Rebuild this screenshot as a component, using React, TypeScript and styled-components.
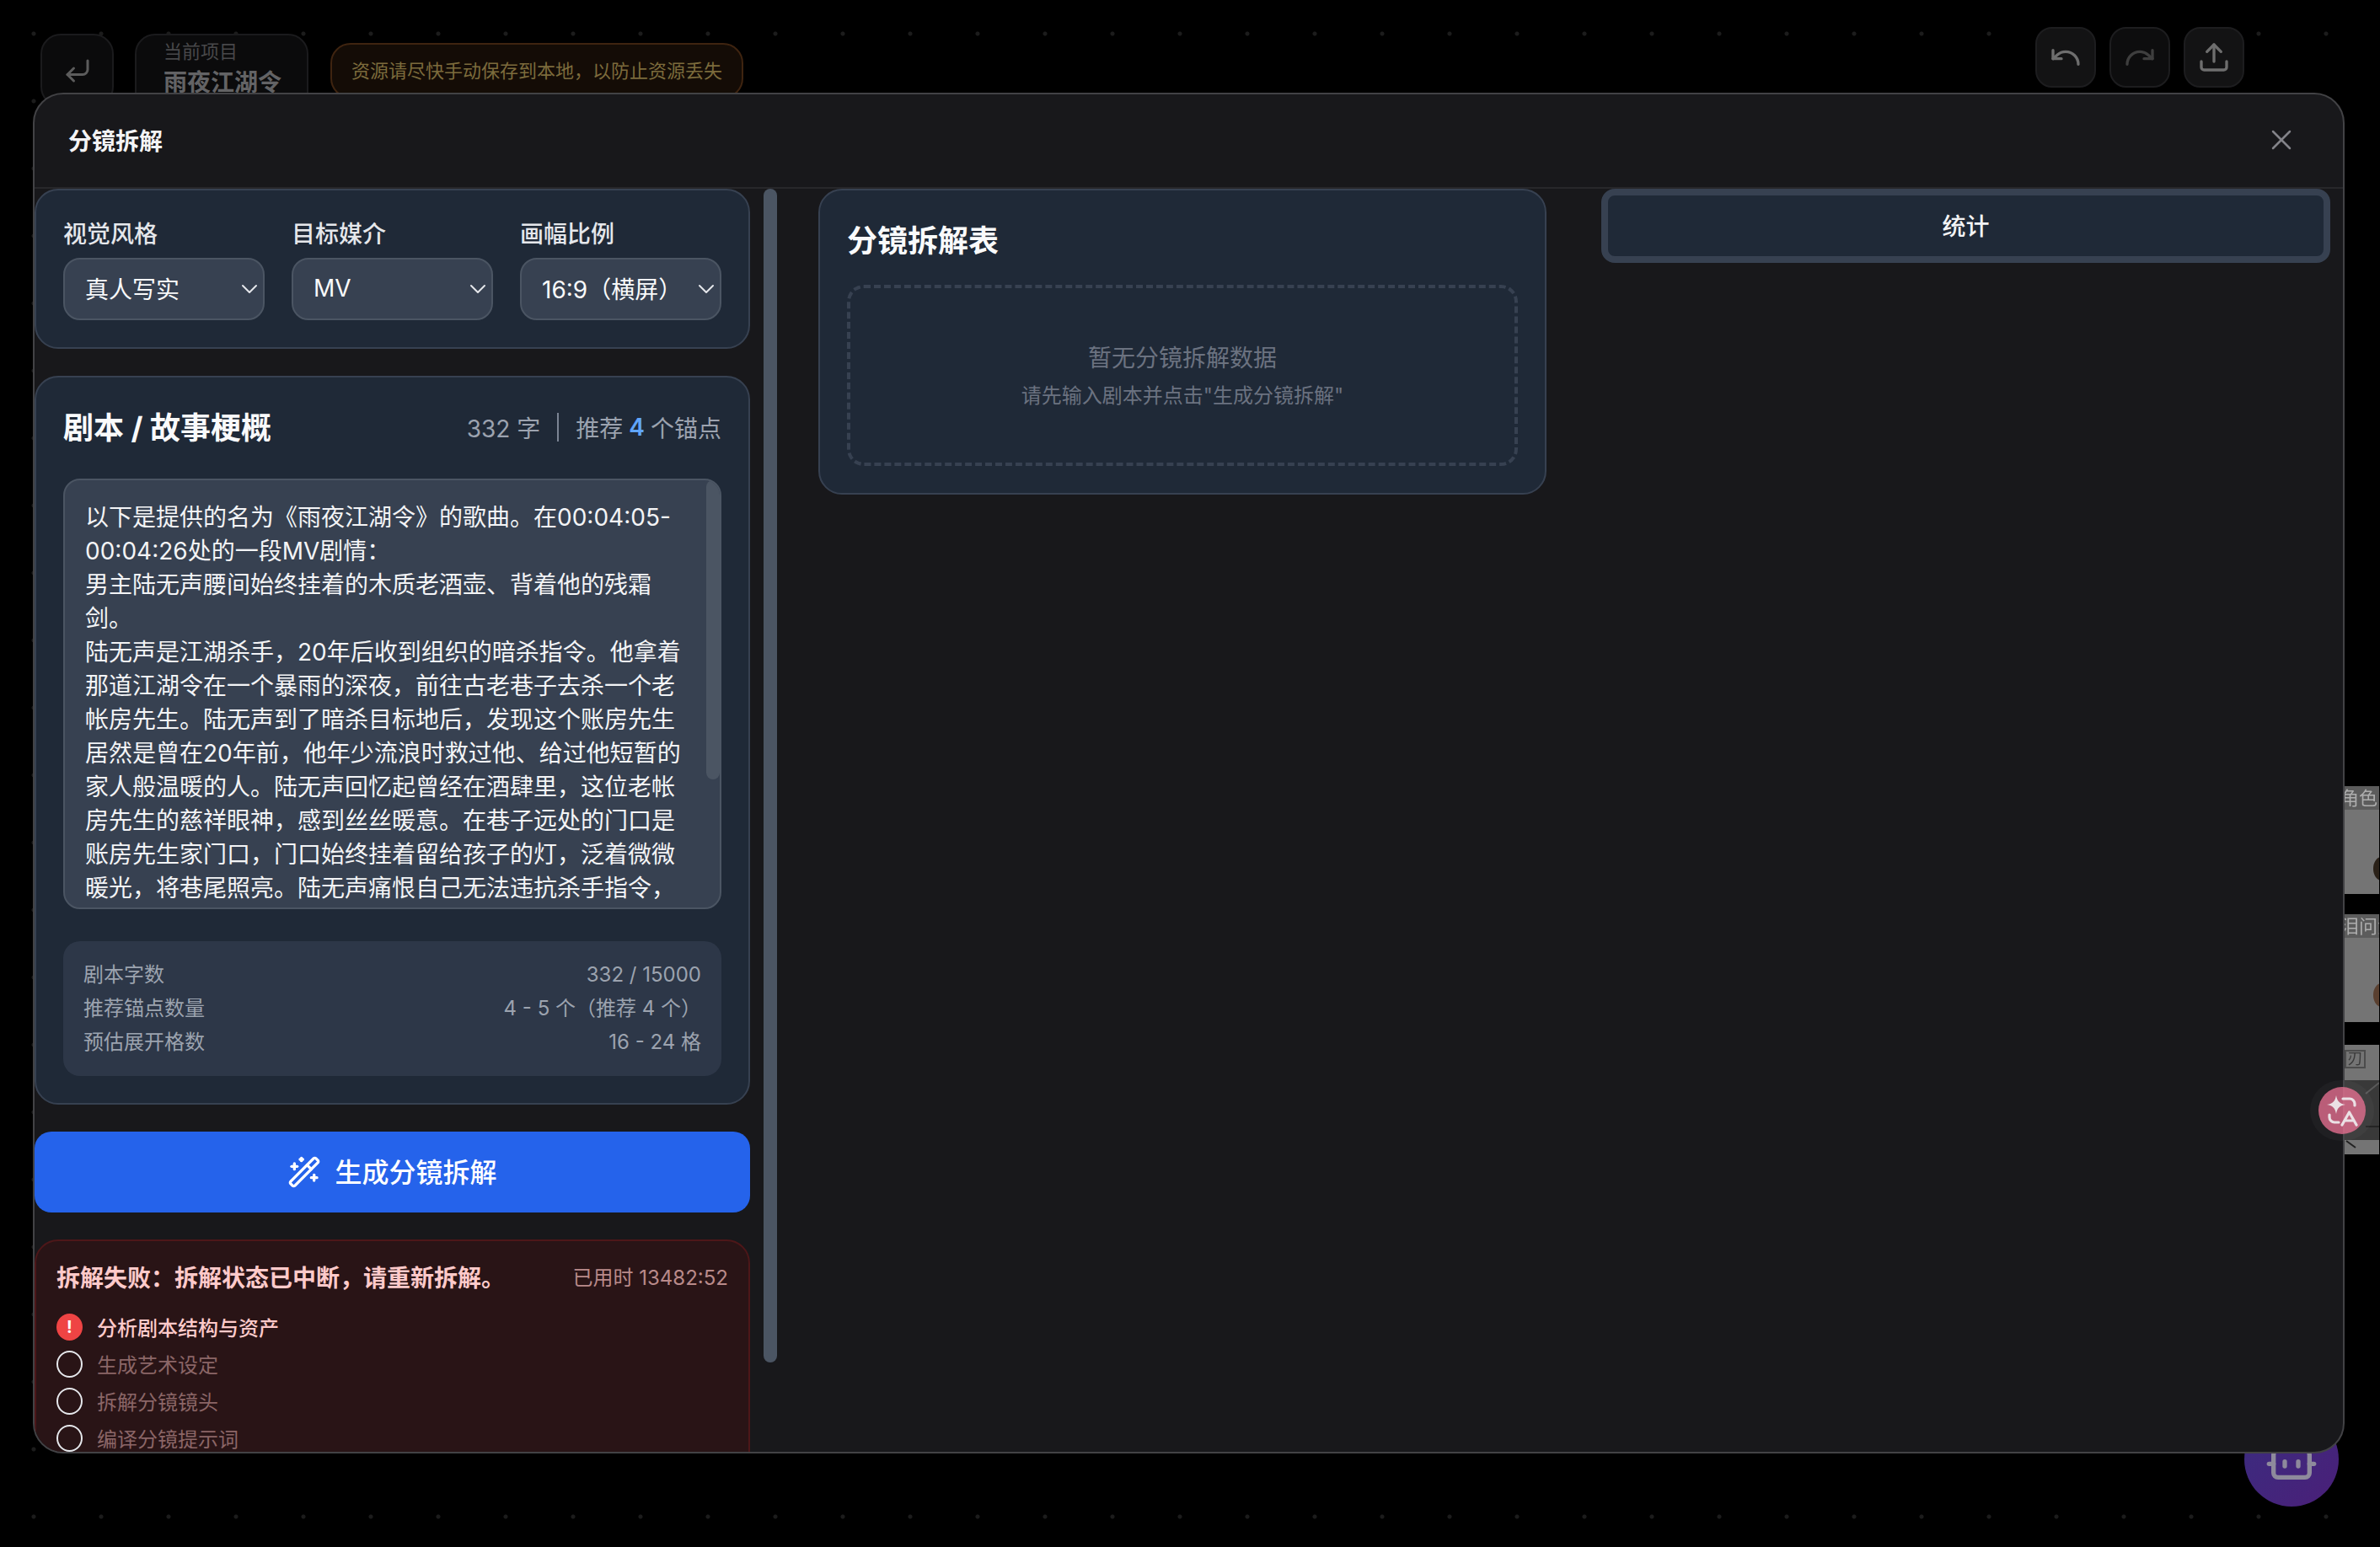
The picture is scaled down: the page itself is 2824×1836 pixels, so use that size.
import React from "react";
import styled, { createGlobalStyle } from "styled-components";
import { ChevronDown, CornerDownLeft, Redo, Undo, Upload, WandSparkles, X, Bot } from "lucide-react";

const GlobalStyle = createGlobalStyle`
  html, body {
    margin: 0;
    background: #000;
  }
  * {
    box-sizing: border-box;
  }
`;

const Page = styled.div`
  position: relative;
  width: 2824px;
  height: 1836px;
  overflow: hidden;
  background-color: #000;
  background-image: radial-gradient(circle at center, #1c1c1c 0, #1c1c1c 2px, transparent 3px);
  background-size: 80px 80px;
  font-family: Inter, "Noto Sans CJK SC", sans-serif;
  color: #fff;
`;

const TopBar = styled.header`
  display: flex;
  align-items: flex-start;
  padding: 32px 161px 0 48px;
`;

const BackButton = styled.button`
  display: flex;
  align-items: center;
  justify-content: center;
  width: 87px;
  height: 87px;
  margin: 8px 25px 0 0;
  padding: 0;
  border: 2px solid #1b1b1d;
  border-radius: 24px;
  background: #0b0b0c;
  color: #5c5c5c;
`;

const ProjectPill = styled.div`
  width: 206px;
  height: 100px;
  margin: 8px 26px 0 0;
  padding: 4px 0 0 32px;
  border: 2px solid #1b1b1d;
  border-radius: 24px;
  background: #0b0b0c;
`;

const ProjectLabel = styled.div`
  font-size: 22px;
  line-height: 30px;
  color: #48484a;
`;

const ProjectName = styled.div`
  font-size: 28px;
  line-height: 44px;
  font-weight: 700;
  color: #636365;
`;

const WarningPill = styled.div`
  width: 490px;
  height: 66px;
  margin-top: 19px;
  padding-top: 16px;
  text-align: center;
  border: 2px solid #3f2410;
  border-radius: 24px;
  background: #140c06;
  font-size: 22px;
  line-height: 30px;
  color: #7c6b3c;
`;

const ToolGroup = styled.div`
  display: flex;
  gap: 16px;
  margin-left: auto;
`;

const ToolButton = styled.button<{ $dim?: boolean }>`
  display: flex;
  align-items: center;
  justify-content: center;
  width: 72px;
  height: 72px;
  padding: 0;
  border: 2px solid #1d1d1f;
  border-radius: 20px;
  background: ${(p) => (p.$dim ? "#0d0d0e" : "#131314")};
  color: ${(p) => (p.$dim ? "#3e3e3e" : "#6e6e6e")};
`;

const CanvasThumb = styled.div<{ $top: number; $height: number }>`
  position: absolute;
  left: 2700px;
  top: ${(p) => p.$top}px;
  width: 123px;
  height: ${(p) => p.$height}px;
  overflow: hidden;
  background: #747474;
`;

const ThumbTag = styled.div`
  height: 28px;
  padding-left: 77px;
  background: #5c5c5c;
  font-size: 22px;
  line-height: 28px;
  white-space: nowrap;
  color: #adadad;
  filter: blur(0.6px);
`;

const ThumbBadge = styled.div`
  position: absolute;
  left: 82px;
  top: 6px;
  width: 25px;
  height: 22px;
  border: 2px solid #4c4c4c;
  font-size: 18px;
  line-height: 18px;
  text-align: center;
  color: #3a3a3a;
  filter: blur(0.5px);
`;

const ThumbBand = styled.div`
  position: absolute;
  left: 0;
  top: 42px;
  width: 100%;
  height: 71px;
  background: #393939;
`;

const ThumbSketch = styled.svg`
  position: absolute;
  left: 0;
  top: 0;
`;

const ThumbHead = styled.div<{ $top: number; $tone: string }>`
  position: absolute;
  left: 116px;
  top: ${(p) => p.$top}px;
  width: 20px;
  height: 28px;
  border-radius: 50%;
  background: ${(p) => p.$tone};
`;

const BotFab = styled.div`
  position: absolute;
  left: 2663px;
  top: 1676px;
  display: flex;
  align-items: center;
  justify-content: center;
  width: 112px;
  height: 112px;
  border-radius: 50%;
  background: linear-gradient(135deg, #3a2d80, #4a1f78);
  color: #8e8a9c;
`;

const Modal = styled.section`
  position: absolute;
  left: 39px;
  top: 110px;
  display: flex;
  flex-direction: column;
  width: 2743px;
  height: 1615px;
  overflow: hidden;
  border: 2px solid #424245;
  border-radius: 36px;
  background: #18181b;
`;

const ModalHeader = styled.div`
  display: flex;
  flex: none;
  align-items: center;
  justify-content: space-between;
  height: 112px;
  padding: 0 53px 2px 40px;
  border-bottom: 2px solid #27272a;
`;

const ModalTitle = styled.h2`
  margin: 0;
  font-size: 28px;
  font-weight: 700;
  color: #f4f4f5;
`;

const CloseIcon = styled.span`
  display: flex;
  color: #84848a;
`;

const ModalBody = styled.div`
  display: flex;
  flex: 1;
  min-height: 0;
`;

const LeftPane = styled.div`
  display: flex;
  flex: none;
  flex-direction: column;
  gap: 32px;
  width: 849px;
  overflow: hidden;
`;

const PaneScroll = styled.div`
  flex: none;
  width: 16px;
  height: 1393px;
  margin: 0 49px 0 16px;
  border-radius: 8px;
  background: #4b5563;
`;

const Card = styled.div`
  flex: none;
  padding: 32px;
  border: 2px solid #374151;
  border-radius: 28px;
  background: #1f2937;
`;

const OptionGrid = styled.div`
  display: grid;
  grid-template-columns: repeat(3, 239px);
  gap: 32px;
`;

const FieldLabel = styled.div`
  margin-bottom: 8px;
  font-size: 28px;
  line-height: 40px;
  font-weight: 500;
  color: #e5e7eb;
`;

const SelectBox = styled.div`
  display: flex;
  align-items: center;
  justify-content: space-between;
  height: 74px;
  padding-left: 24px;
  border: 2px solid #4b5563;
  border-radius: 20px;
  background: #374151;
  font-size: 28px;
  white-space: nowrap;
  color: #f9fafb;

  span {
    margin-top: -2px;
  }

  svg {
    flex: none;
    margin-right: 0;
    color: #e5e7eb;
  }
`;

const ScriptHeader = styled.div`
  display: flex;
  align-items: center;
  justify-content: space-between;
  height: 56px;
  margin-bottom: 32px;
`;

const CardTitle = styled.h3`
  margin: 0;
  font-size: 36px;
  line-height: 52px;
  font-weight: 700;
  color: #f9fafb;
`;

const ScriptMeta = styled.div`
  display: flex;
  align-items: center;
  margin-top: -2px;
  font-size: 28px;
  color: #9ca3af;

  b {
    margin: 0 7px;
    font-weight: 600;
    color: #60a5fa;
  }
`;

const MetaDivider = styled.i`
  width: 2px;
  height: 34px;
  margin: 0 20px;
  background: #7b8493;
`;

const ScriptBox = styled.div`
  position: relative;
  height: 511px;
  overflow: hidden;
  padding: 24px 40px 0 24px;
  border: 2px solid #4b5563;
  border-radius: 20px;
  background: #374151;
  font-size: 28px;
  line-height: 40px;
  white-space: pre-wrap;
  color: #f3f4f6;
`;

const ScriptThumb = styled.div`
  position: absolute;
  top: 0;
  right: 0;
  width: 16px;
  height: 355px;
  border-radius: 8px;
  background: #4b5563;
`;

const StatBox = styled.div`
  margin-top: 38px;
  padding: 20px 24px;
  border-radius: 20px;
  background: #2d3748;
`;

const StatRow = styled.div`
  display: flex;
  justify-content: space-between;
  font-size: 24px;
  line-height: 40px;
  color: #9ca3af;
`;

const GenerateButton = styled.button`
  display: flex;
  flex: none;
  align-items: center;
  justify-content: center;
  gap: 16px;
  height: 96px;
  padding: 0;
  border: 0;
  border-radius: 20px;
  background: #2563eb;
  font-family: inherit;
  font-size: 32px;
  font-weight: 500;
  color: #fff;

  span {
    margin-top: -4px;
  }
`;

const ErrorCard = styled.div`
  flex: none;
  padding: 24px;
  border: 2px solid #4d1719;
  border-radius: 28px;
  background: #291416;
`;

const ErrorHead = styled.div`
  display: flex;
  align-items: center;
  justify-content: space-between;
  margin-bottom: 22px;
  line-height: 40px;
`;

const ErrorTitle = styled.div`
  font-size: 28px;
  font-weight: 700;
  color: #fecaca;
`;

const ErrorTime = styled.div`
  font-size: 24px;
  color: #b98a8a;
`;

const StepList = styled.div`
  display: flex;
  flex-direction: column;
  gap: 12px;
`;

const Step = styled.div<{ $failed?: boolean }>`
  display: flex;
  align-items: center;
  gap: 17px;
  height: 32px;
  font-size: 24px;
  font-weight: ${(p) => (p.$failed ? 500 : 400)};
  color: ${(p) => (p.$failed ? "#fecaca" : "#8b6667")};
`;

const StepText = styled.span`
  margin-top: -2px;
`;

const StepMark = styled.span<{ $failed?: boolean }>`
  display: flex;
  flex: none;
  align-items: center;
  justify-content: center;
  width: 31px;
  height: 32px;
  border-radius: 50%;
  border: ${(p) => (p.$failed ? "0" : "2px solid #e5e7eb")};
  background: ${(p) => (p.$failed ? "#ef4444" : "transparent")};
  font-size: 20px;
  font-weight: 700;
  color: #fff;
`;

const CenterPane = styled.div`
  flex: none;
  align-self: flex-start;
  width: 864px;
  margin-right: 65px;
`;

const TableTitle = styled(CardTitle)`
  margin-bottom: 26px;
  padding-top: 2px;
  height: 54px;
`;

const EmptyBox = styled.div`
  display: flex;
  flex-direction: column;
  align-items: center;
  justify-content: center;
  height: 215px;
  border: 4px dashed #374151;
  border-radius: 20px;
`;

const EmptyMain = styled.div`
  font-size: 28px;
  line-height: 40px;
  color: #6b7280;
`;

const EmptySub = styled.div`
  margin-top: 9px;
  font-size: 24px;
  line-height: 32px;
  color: #6b7280;
`;

const StatsTab = styled.button`
  flex: none;
  align-self: flex-start;
  width: 865px;
  height: 88px;
  padding: 0 0 2px;
  border: 8px solid #374151;
  border-radius: 16px;
  background: #1f2937;
  font-family: inherit;
  font-size: 28px;
  font-weight: 500;
  color: #f3f4f6;
`;

const TranslateHalo = styled.div`
  position: absolute;
  left: 2741px;
  top: 1282px;
  display: flex;
  align-items: center;
  justify-content: center;
  width: 76px;
  height: 72px;
  border-radius: 36px;
  background: rgba(255, 255, 255, 0.03);
`;

const TranslateButton = styled.div`
  display: flex;
  width: 56px;
  height: 56px;
  border-radius: 50%;
  background: rgba(239, 115, 150, 0.75);
`;

const script = `以下是提供的名为《雨夜江湖令》的歌曲。在00:04:05-00:04:26处的一段MV剧情：
男主陆无声腰间始终挂着的木质老酒壶、背着他的残霜剑。
陆无声是江湖杀手，20年后收到组织的暗杀指令。他拿着那道江湖令在一个暴雨的深夜，前往古老巷子去杀一个老帐房先生。陆无声到了暗杀目标地后，发现这个账房先生居然是曾在20年前，他年少流浪时救过他、给过他短暂的家人般温暖的人。陆无声回忆起曾经在酒肆里，这位老帐房先生的慈祥眼神，感到丝丝暖意。在巷子远处的门口是账房先生家门口，门口始终挂着留给孩子的灯，泛着微微暖光，将巷尾照亮。陆无声痛恨自己无法违抗杀手指令，`;

const options = [
  { label: "视觉风格", value: "真人写实" },
  { label: "目标媒介", value: "MV" },
  { label: "画幅比例", value: "16:9（横屏）" },
];

const stats = [
  { label: "剧本字数", value: "332 / 15000" },
  { label: "推荐锚点数量", value: "4 - 5 个（推荐 4 个）" },
  { label: "预估展开格数", value: "16 - 24 格" },
];

const steps = ["分析剧本结构与资产", "生成艺术设定", "拆解分镜镜头", "编译分镜提示词"];

function TranslateIcon() {
  return (
    <svg width="56" height="56" viewBox="0 0 56 56" fill="none" stroke="#ebe1e5" strokeWidth="3.2" strokeLinecap="round" strokeLinejoin="round">
      <path d="M21 10c1.4 7 3.6 9.600 11 11-7.400 1.400-9.600 4-11 11-1.400-7-3.600-9.600-11-11 7.400-1.400 9.600-4 11-11z" fill="#ebe1e5" stroke="none" />
      <path d="M29 14h8a6 6 0 0 1 6 6v2" />
      <path d="M13 33v3a6 6 0 0 0 6 6h5" />
      <path d="M28 45l8.500-15 8.500 15M31 40h11" />
    </svg>
  );
}

export default function App() {
  return (
    <Page>
      <GlobalStyle />
      <TopBar>
        <BackButton><CornerDownLeft size={36} strokeWidth={2} /></BackButton>
        <ProjectPill>
          <ProjectLabel>当前项目</ProjectLabel>
          <ProjectName>雨夜江湖令</ProjectName>
        </ProjectPill>
        <WarningPill>资源请尽快手动保存到本地，以防止资源丢失</WarningPill>
        <ToolGroup>
          <ToolButton><Undo size={40} /></ToolButton>
          <ToolButton $dim><Redo size={40} /></ToolButton>
          <ToolButton><Upload size={40} /></ToolButton>
        </ToolGroup>
      </TopBar>

      <CanvasThumb $top={933} $height={128}>
        <ThumbTag>角色</ThumbTag>
        <ThumbHead $top={84} $tone="#2a2118" />
      </CanvasThumb>
      <CanvasThumb $top={1085} $height={128}>
        <ThumbTag>泪问活</ThumbTag>
        <ThumbHead $top={82} $tone="#5a4030" />
      </CanvasThumb>
      <CanvasThumb $top={1240} $height={130}>
        <ThumbBadge>刃</ThumbBadge>
        <ThumbBand />
        <ThumbSketch width="123" height="130" viewBox="0 0 123 130" fill="none" stroke="#222" strokeWidth="2">
          <path d="M107 58l16-13" stroke="#5a5a5a" />
          <path d="M107 97h16" stroke="#242424" />
          <path d="M84 114l11 8" />
        </ThumbSketch>
      </CanvasThumb>

      <BotFab><Bot size={64} /></BotFab>

      <Modal>
        <ModalHeader>
          <ModalTitle>分镜拆解</ModalTitle>
          <CloseIcon><X size={40} strokeWidth={1.5} /></CloseIcon>
        </ModalHeader>
        <ModalBody>
          <LeftPane>
            <Card>
              <OptionGrid>
                {options.map((o) => (
                  <div key={o.label}>
                    <FieldLabel>{o.label}</FieldLabel>
                    <SelectBox>
                      <span>{o.value}</span>
                      <ChevronDown size={32} strokeWidth={1.5} />
                    </SelectBox>
                  </div>
                ))}
              </OptionGrid>
            </Card>

            <Card>
              <ScriptHeader>
                <CardTitle>剧本 / 故事梗概</CardTitle>
                <ScriptMeta>
                  332 字<MetaDivider />推荐<b>4</b>个锚点
                </ScriptMeta>
              </ScriptHeader>
              <ScriptBox>
                {script}
                <ScriptThumb />
              </ScriptBox>
              <StatBox>
                {stats.map((s) => (
                  <StatRow key={s.label}>
                    <span>{s.label}</span>
                    <span>{s.value}</span>
                  </StatRow>
                ))}
              </StatBox>
            </Card>

            <GenerateButton>
              <WandSparkles size={40} />
              <span>生成分镜拆解</span>
            </GenerateButton>

            <ErrorCard>
              <ErrorHead>
                <ErrorTitle>拆解失败：拆解状态已中断，请重新拆解。</ErrorTitle>
                <ErrorTime>已用时 13482:52</ErrorTime>
              </ErrorHead>
              <StepList>
                {steps.map((s, i) => (
                  <Step key={s} $failed={i === 0}>
                    <StepMark $failed={i === 0}>{i === 0 ? "!" : null}</StepMark>
                    <StepText>{s}</StepText>
                  </Step>
                ))}
              </StepList>
            </ErrorCard>
          </LeftPane>

          <PaneScroll />

          <CenterPane>
            <Card>
              <TableTitle>分镜拆解表</TableTitle>
              <EmptyBox>
                <EmptyMain>暂无分镜拆解数据</EmptyMain>
                <EmptySub>请先输入剧本并点击"生成分镜拆解"</EmptySub>
              </EmptyBox>
            </Card>
          </CenterPane>

          <StatsTab>统计</StatsTab>
        </ModalBody>
      </Modal>

      <TranslateHalo>
        <TranslateButton><TranslateIcon /></TranslateButton>
      </TranslateHalo>
    </Page>
  );
}
